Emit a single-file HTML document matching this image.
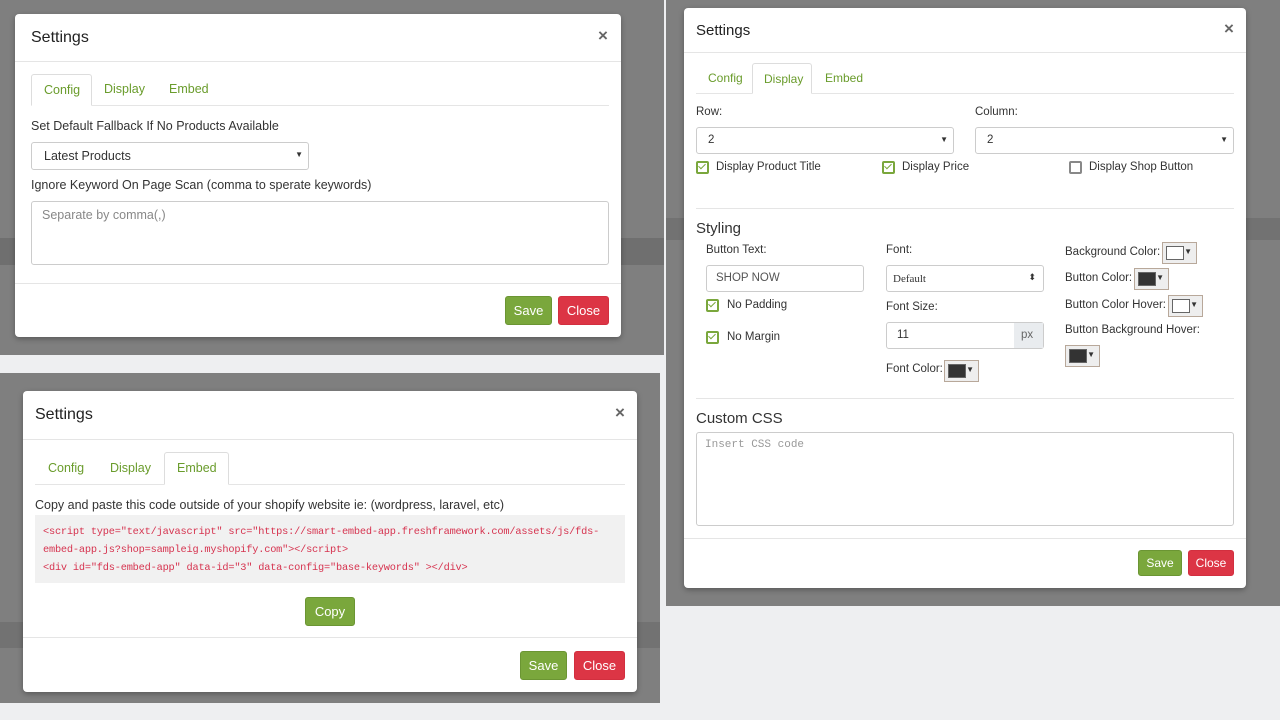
<!DOCTYPE html>
<html><head><style>
*{box-sizing:border-box;margin:0;padding:0}
body{width:1280px;height:720px;position:relative;overflow:hidden;background:#eeeff1;font-family:"Liberation Sans",sans-serif;color:#333;font-size:12.5px}
.a{position:absolute}
.g{background:#7f7f7f}
.m{position:absolute;background:#fff;border-radius:4px;box-shadow:0 2px 6px rgba(0,0,0,.3)}
.t{position:absolute;font-size:16px;color:#222}
.x{position:absolute;font-size:17px;font-weight:bold;color:#666}
.hl{position:absolute;height:1px;background:#e5e5e5}
.tab{position:absolute;color:#6a9c2c;font-size:12.5px}
.act{border:1px solid #ddd;border-bottom:1px solid #fff;border-radius:3px 3px 0 0;background:#fff}
.btn{position:absolute;color:#fff;border-radius:3px;font-size:13px;text-align:center}
.sv{background:#7aa73c;border:1px solid #6b9533}
.cl{background:#dc3545;border:1px solid #d22f3f}
.in{position:absolute;border:1px solid #ccc;border-radius:3px;background:#fff}
.cb{position:absolute;width:13px;height:13px;border:2px solid #7aa73c;border-radius:2px}
.cb.on::after{content:"";position:absolute;left:2px;top:-1px;width:3px;height:6px;border:solid #7aa73c;border-width:0 1.5px 1.5px 0;transform:rotate(45deg)}
.sw{position:absolute;width:35px;height:22px;border:1px solid #b8a89a;background:#eee}
.sw i{position:absolute;left:3px;top:3px;width:18px;height:14px;border:1px solid #666}
.sw b{position:absolute;right:4px;top:4px;font-size:8px;font-weight:normal}
.r{font-size:11.5px}
</style></head><body>
<div class="a g" style="left:0;top:0;width:664px;height:355px"></div>
<div class="a" style="left:0;top:238px;width:664px;height:27px;background:#6f6f6f"></div>
<div class="a g" style="left:666px;top:0;width:614px;height:606px"></div>
<div class="a" style="left:666px;top:218px;width:614px;height:22px;background:#727272"></div>
<div class="a g" style="left:0;top:373px;width:660px;height:330px"></div>
<div class="a" style="left:0;top:622px;width:660px;height:26px;background:#727272"></div>

<!-- modal 1 -->
<div class="m" style="left:15px;top:14px;width:606px;height:323px"></div>
<div class="t" style="left:31px;top:29px">Settings</div>
<div class="x" style="left:598px;top:26px">×</div>
<div class="hl" style="left:15px;top:61px;width:606px"></div>
<div class="hl" style="left:31px;top:105px;width:578px"></div>
<div class="tab act" style="left:31px;top:74px;width:61px;height:32px;padding:8px 0 0 12px">Config</div>
<div class="tab" style="left:104px;top:82px">Display</div>
<div class="tab" style="left:169px;top:82px">Embed</div>
<div class="a" style="left:31px;top:119px">Set Default Fallback If No Products Available</div>
<div class="in" style="left:31px;top:142px;width:278px;height:28px;padding:6px 12px">Latest Products<span style="position:absolute;right:5px;top:7px;font-size:8px">▼</span></div>
<div class="a" style="left:31px;top:178px">Ignore Keyword On Page Scan (comma to sperate keywords)</div>
<div class="in" style="left:31px;top:201px;width:578px;height:64px;padding:6px 10px;color:#888">Separate by comma(,)</div>
<div class="hl" style="left:15px;top:283px;width:606px"></div>
<div class="btn sv" style="left:505px;top:296px;width:47px;height:29px;line-height:27px">Save</div>
<div class="btn cl" style="left:558px;top:296px;width:51px;height:29px;line-height:27px">Close</div>

<!-- modal 2 -->
<div class="m" style="left:684px;top:8px;width:562px;height:580px"></div>
<div class="t" style="left:696px;top:22px;font-size:15px">Settings</div>
<div class="x" style="left:1224px;top:19px">×</div>
<div class="hl" style="left:684px;top:52px;width:562px"></div>
<div class="hl" style="left:696px;top:93px;width:538px"></div>
<div class="tab" style="left:708px;top:71px;font-size:12px">Config</div>
<div class="tab act" style="left:752px;top:63px;width:60px;height:31px;padding:8px 0 0 11px;font-size:12px">Display</div>
<div class="tab" style="left:825px;top:71px;font-size:12px">Embed</div>
<div class="a r" style="left:696px;top:106px">Row:</div>
<div class="a r" style="left:975px;top:106px">Column:</div>
<div class="in r" style="left:696px;top:127px;width:258px;height:27px;padding:6px 11px">2<span style="position:absolute;right:5px;top:7px;font-size:8px">▼</span></div>
<div class="in r" style="left:975px;top:127px;width:259px;height:27px;padding:6px 11px">2<span style="position:absolute;right:5px;top:7px;font-size:8px">▼</span></div>
<div class="cb on" style="left:696px;top:161px"></div><div class="a r" style="left:716px;top:161px">Display Product Title</div>
<div class="cb on" style="left:882px;top:161px"></div><div class="a r" style="left:902px;top:161px">Display Price</div>
<div class="cb" style="left:1069px;top:161px;border-color:#888"></div><div class="a r" style="left:1089px;top:161px">Display Shop Button</div>
<div class="hl" style="left:696px;top:208px;width:538px"></div>
<div class="a" style="left:696px;top:220px;font-size:15px">Styling</div>
<div class="a r" style="left:706px;top:244px">Button Text:</div>
<div class="in r" style="left:706px;top:265px;width:158px;height:27px;padding:6px 9px;color:#555">SHOP NOW</div>
<div class="cb on" style="left:706px;top:299px"></div><div class="a r" style="left:727px;top:299px">No Padding</div>
<div class="cb on" style="left:706px;top:331px"></div><div class="a r" style="left:727px;top:331px">No Margin</div>
<div class="a r" style="left:886px;top:244px">Font:</div>
<div class="in" style="left:886px;top:265px;width:158px;height:27px;padding:7px 6px;font-size:11px;font-family:'Liberation Serif',serif">Default<span style="position:absolute;right:7px;top:6px;font-size:9px">⬍</span></div>
<div class="a r" style="left:886px;top:301px">Font Size:</div>
<div class="in r" style="left:886px;top:322px;width:158px;height:27px;padding:6px 10px">11<span style="position:absolute;right:0;top:0;width:29px;height:25px;background:#e9ecef;color:#666;padding:6px 7px">px</span></div>
<div class="a r" style="left:886px;top:363px">Font Color:</div>
<div class="sw" style="left:944px;top:360px"><i style="background:#333"></i><b>▼</b></div>
<div class="a r" style="left:1065px;top:246px">Background Color:</div>
<div class="sw" style="left:1162px;top:242px"><i style="background:#fff"></i><b>▼</b></div>
<div class="a r" style="left:1065px;top:272px">Button Color:</div>
<div class="sw" style="left:1134px;top:268px"><i style="background:#333"></i><b>▼</b></div>
<div class="a r" style="left:1065px;top:299px">Button Color Hover:</div>
<div class="sw" style="left:1168px;top:295px"><i style="background:#fff"></i><b>▼</b></div>
<div class="a r" style="left:1065px;top:324px">Button Background Hover:</div>
<div class="sw" style="left:1065px;top:345px"><i style="background:#333"></i><b>▼</b></div>
<div class="hl" style="left:696px;top:398px;width:538px"></div>
<div class="a" style="left:696px;top:410px;font-size:15px">Custom CSS</div>
<div class="in" style="left:696px;top:432px;width:538px;height:94px;padding:6px 8px;font-family:'Liberation Mono',monospace;font-size:11px;color:#999">Insert CSS code</div>
<div class="hl" style="left:684px;top:538px;width:562px"></div>
<div class="btn sv" style="left:1138px;top:550px;width:44px;height:26px;line-height:24px;font-size:12px">Save</div>
<div class="btn cl" style="left:1188px;top:550px;width:46px;height:26px;line-height:24px;font-size:12px">Close</div>

<!-- modal 3 -->
<div class="m" style="left:23px;top:391px;width:614px;height:301px"></div>
<div class="t" style="left:35px;top:406px">Settings</div>
<div class="x" style="left:615px;top:403px">×</div>
<div class="hl" style="left:23px;top:439px;width:614px"></div>
<div class="hl" style="left:35px;top:484px;width:590px"></div>
<div class="tab" style="left:48px;top:461px">Config</div>
<div class="tab" style="left:110px;top:461px">Display</div>
<div class="tab act" style="left:164px;top:452px;width:65px;height:33px;padding:8px 0 0 12px">Embed</div>
<div class="a" style="left:35px;top:498px">Copy and paste this code outside of your shopify website ie: (wordpress, laravel, etc)</div>
<div class="a" style="left:35px;top:515px;width:590px;height:68px;background:#f1f1f1;padding:8px 8px;font-family:'Liberation Mono',monospace;font-size:10.3px;line-height:18px;color:#d6334f;letter-spacing:-.2px">&lt;script type="text/javascript" src="https://smart-embed-app.freshframework.com/assets/js/fds-<br>embed-app.js?shop=sampleig.myshopify.com"&gt;&lt;/script&gt;<br>&lt;div id="fds-embed-app" data-id="3" data-config="base-keywords" &gt;&lt;/div&gt;</div>
<div class="btn sv" style="left:305px;top:597px;width:50px;height:29px;line-height:27px">Copy</div>
<div class="hl" style="left:23px;top:637px;width:614px"></div>
<div class="btn sv" style="left:520px;top:651px;width:47px;height:29px;line-height:27px">Save</div>
<div class="btn cl" style="left:574px;top:651px;width:51px;height:29px;line-height:27px">Close</div>
</body></html>
